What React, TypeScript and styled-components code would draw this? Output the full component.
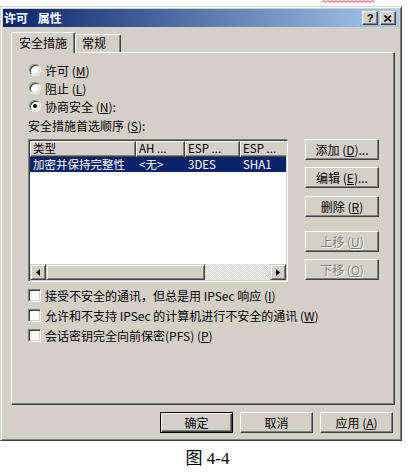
import React from 'react';
import styled, { createGlobalStyle } from 'styled-components';

const GlobalStyle = createGlobalStyle`
  html, body {
    margin: 0;
    padding: 0;
    background: #fff;
  }
  body {
    font-family: "Noto Sans CJK SC", "Noto Sans", sans-serif;
    font-size: 12px;
    color: #000;
  }
`;

const Page = styled.div`
  width: 409px;
  height: 473px;
  display: flex;
  flex-direction: column;
`;

const TopStrip = styled.div`
  height: 6px;
  padding-left: 322px;
  display: flex;
  align-items: flex-start;
`;

const Window = styled.div`
  box-sizing: border-box;
  width: 402px;
  height: 435px;
  padding: 2px;
  background: #d4d0c8;
  border: 1px solid;
  border-color: #d4d0c8 #404040 #404040 #d4d0c8;
  box-shadow: inset 1px 1px #fff, inset -1px -1px #808080;
  display: flex;
  flex-direction: column;
`;

const TitleBar = styled.div`
  height: 18px;
  flex-shrink: 0;
  display: flex;
  align-items: center;
  padding: 0 3px 0 1px;
  background: linear-gradient(to right, #0a246a, #a6caf0);
`;

const TitleText = styled.span`
  flex: 1;
  color: #fff;
  font-weight: bold;
  font-size: 12px;
  line-height: 18px;
  word-spacing: 7px;
`;

const CaptionButton = styled.div<{ $gap?: number }>`
  box-sizing: border-box;
  width: 16px;
  height: 14px;
  margin-left: ${(p) => p.$gap ?? 0}px;
  background: #d4d0c8;
  border: 1px solid;
  border-color: #fff #404040 #404040 #fff;
  box-shadow: inset -1px -1px #808080;
  display: flex;
  align-items: center;
  justify-content: center;
  font-family: "Liberation Sans", sans-serif;
  font-weight: bold;
  font-size: 11px;
  line-height: 12px;
`;

const Body = styled.div`
  flex: 1;
  display: flex;
  flex-direction: column;
  padding: 5px 4px 0 8px;
`;

const TabRow = styled.div`
  display: flex;
  align-items: flex-end;
  height: 20px;
`;

const Tab = styled.div<{ $active?: boolean; $w: number }>`
  position: relative;
  z-index: ${(p) => (p.$active ? 1 : 0)};
  box-sizing: border-box;
  width: ${(p) => p.$w}px;
  height: ${(p) => (p.$active ? 21 : 18)}px;
  margin-bottom: ${(p) => (p.$active ? -1 : 0)}px;
  padding-left: ${(p) => (p.$active ? 0 : 6)}px;
  text-align: ${(p) => (p.$active ? 'center' : 'left')};
  background: #d4d0c8;
  border-top: 1px solid #fff;
  border-left: 1px solid #fff;
  border-right: 1px solid #404040;
  border-top-left-radius: 2px;
  border-top-right-radius: 2px;
  box-shadow: inset -1px 0 #808080;
  line-height: ${(p) => (p.$active ? 19 : 16)}px;
`;

const Panel = styled.div`
  box-sizing: border-box;
  height: 353px;
  border: 1px solid;
  border-color: #fff #404040 #404040 #fff;
  box-shadow: inset -1px -1px #808080;
  padding: 8px 0 0 16px;
  display: flex;
  flex-direction: column;
`;

const OptionRow = styled.label<{ $h?: number }>`
  display: flex;
  align-items: center;
  height: ${(p) => p.$h ?? 18}px;
  gap: 4px;
  white-space: nowrap;
`;

const Radio = styled.span<{ $on?: boolean }>`
  box-sizing: border-box;
  width: 12px;
  height: 12px;
  margin-left: 1px;
  border-radius: 50%;
  background: #fff;
  border: 1px solid;
  border-color: #808080 #fff #fff #808080;
  box-shadow: inset 1px 1px #404040, inset -1px -1px #d4d0c8;
  display: flex;
  align-items: center;
  justify-content: center;

  &::after {
    content: '';
    width: 4px;
    height: 4px;
    border-radius: 50%;
    background: ${(p) => (p.$on ? '#000' : 'transparent')};
  }
`;

const CheckBox = styled.span`
  box-sizing: border-box;
  width: 13px;
  height: 13px;
  background: #fff;
  border: 1px solid;
  border-color: #808080 #fff #fff #808080;
  box-shadow: inset 1px 1px #404040, inset -1px -1px #d4d0c8;
`;

const Underline = styled.span`
  text-decoration: underline;
`;

const SectionLabel = styled.div`
  margin-top: 4px;
  height: 14px;
  line-height: 14px;
  white-space: nowrap;
`;

const Middle = styled.div`
  display: flex;
  margin-top: 6px;
`;

const ListBox = styled.div`
  box-sizing: border-box;
  width: 260px;
  height: 143px;
  background: #fff;
  border: 1px solid;
  border-color: #808080 #fff #fff #808080;
  box-shadow: inset 1px 1px #404040, inset -1px -1px #d4d0c8;
  padding: 1px;
  display: flex;
  flex-direction: column;
`;

const ListInner = styled.div`
  flex: 1;
  overflow: hidden;
  display: flex;
  flex-direction: column;
`;

const HeaderRow = styled.div`
  display: flex;
  height: 16px;
  flex-shrink: 0;
`;

const HeaderCell = styled.div<{ $w: number }>`
  box-sizing: border-box;
  flex-shrink: 0;
  width: ${(p) => p.$w}px;
  height: 16px;
  padding-left: 2px;
  background: #d4d0c8;
  border: 1px solid;
  border-color: #fff #404040 #404040 #fff;
  box-shadow: inset -1px -1px #808080;
  font-size: 11.5px;
  line-height: 13px;
  white-space: nowrap;
`;

const DataRow = styled.div<{ $selected?: boolean }>`
  display: flex;
  height: 15px;
  flex-shrink: 0;
  background: ${(p) => (p.$selected ? '#0a246a' : 'transparent')};
  color: ${(p) => (p.$selected ? '#fff' : '#000')};
`;

const DataCell = styled.div<{ $w: number }>`
  flex-shrink: 0;
  width: ${(p) => p.$w}px;
  padding-left: 3px;
  box-sizing: border-box;
  font-size: 11.5px;
  line-height: 15px;
  white-space: nowrap;
`;

const ListSpacer = styled.div`
  flex: 1;
`;

const ScrollBar = styled.div`
  display: flex;
  height: 16px;
  flex-shrink: 0;
`;

const ScrollButton = styled.div<{ $w: number }>`
  box-sizing: border-box;
  width: ${(p) => p.$w}px;
  height: 16px;
  flex-shrink: 0;
  background: #d4d0c8;
  border: 1px solid;
  border-color: #d4d0c8 #404040 #404040 #d4d0c8;
  box-shadow: inset 1px 1px #fff, inset -1px -1px #808080;
  display: flex;
  align-items: center;
  justify-content: center;
`;

const ScrollTrack = styled.div`
  flex: 1;
  background-color: #d4d0c8;
  background-image: repeating-conic-gradient(#fff 0 25%, #d4d0c8 0 50%);
  background-size: 2px 2px;
`;

const SideButtons = styled.div`
  display: flex;
  flex-direction: column;
  margin-left: 17px;
`;

const Button = styled.div<{ $w?: number; $top?: number; $disabled?: boolean; $default?: boolean }>`
  box-sizing: border-box;
  width: ${(p) => p.$w ?? 73}px;
  height: 21px;
  margin-top: ${(p) => p.$top ?? 0}px;
  background: #d4d0c8;
  border: 1px solid;
  border-color: ${(p) => (p.$default ? '#000' : '#fff #404040 #404040 #fff')};
  box-shadow: ${(p) =>
    p.$default
      ? 'inset 1px 1px #fff, inset -1px -1px #404040, inset -2px -2px #808080'
      : 'inset -1px -1px #808080'};
  display: flex;
  align-items: center;
  justify-content: center;
  white-space: nowrap;
  color: ${(p) => (p.$disabled ? '#808080' : '#000')};
  text-shadow: ${(p) => (p.$disabled ? '1px 1px #fff' : 'none')};
`;

const CheckGroup = styled.div`
  display: flex;
  flex-direction: column;
  gap: 2px;
  margin-top: 4px;
`;

const ButtonRow = styled.div`
  display: flex;
  justify-content: flex-end;
  gap: 7px;
  margin-top: 7px;
  padding-right: 2px;
`;

const Caption = styled.div`
  margin-top: 8px;
  text-align: center;
  font-family: "Liberation Serif", "Noto Sans CJK SC", serif;
  font-size: 17px;
  line-height: 20px;
  padding-left: 6px;
`;

const Key: React.FC<{ k: string }> = ({ k }) => (
  <>
    {' ('}
    <Underline>{k}</Underline>)
  </>
);

const columns = [106, 49, 55, 60];

const Arrow: React.FC<{ dir: 'left' | 'right' }> = ({ dir }) => (
  <svg width="4" height="7" viewBox="0 0 4 7">
    {dir === 'left' ? <polygon points="4,0 4,7 0,3.5" fill="#000" /> : <polygon points="0,0 0,7 4,3.5" fill="#000" />}
  </svg>
);

export default function App() {
  return (
    <Page>
      <GlobalStyle />
      <TopStrip>
        <svg width="53" height="3" viewBox="0 0 53 3">
          <polyline
            points={Array.from({ length: 27 }, (_, i) => `${i * 2},${i % 2 ? 0.5 : 2.5}`).join(' ')}
            fill="none"
            stroke="#e03030"
            strokeWidth="1"
          />
        </svg>
      </TopStrip>
      <Window>
        <TitleBar>
          <TitleText>许可 属性</TitleText>
          <CaptionButton>?</CaptionButton>
          <CaptionButton $gap={2}>
            <svg width="8" height="7" viewBox="0 0 8 7">
              <path d="M0.5 0.5 L7 6.5 M7 0.5 L0.5 6.5" stroke="#000" strokeWidth="1.6" />
            </svg>
          </CaptionButton>
        </TitleBar>
        <Body>
          <TabRow>
            <Tab $active $w={64}>安全措施</Tab>
            <Tab $w={46}>常规</Tab>
          </TabRow>
          <Panel>
            <OptionRow>
              <Radio />
              <span>
                许可<Key k="M" />
              </span>
            </OptionRow>
            <OptionRow>
              <Radio />
              <span>
                阻止<Key k="L" />
              </span>
            </OptionRow>
            <OptionRow>
              <Radio $on />
              <span>
                协商安全<Key k="N" />:
              </span>
            </OptionRow>
            <SectionLabel>
              安全措施首选顺序<Key k="S" />:
            </SectionLabel>
            <Middle>
              <ListBox>
                <ListInner>
                  <HeaderRow>
                    <HeaderCell $w={columns[0]}>类型</HeaderCell>
                    <HeaderCell $w={columns[1]}>AH ...</HeaderCell>
                    <HeaderCell $w={columns[2]}>ESP ...</HeaderCell>
                    <HeaderCell $w={columns[3]}>ESP ...</HeaderCell>
                  </HeaderRow>
                  <DataRow $selected>
                    <DataCell $w={columns[0]}>加密并保持完整性</DataCell>
                    <DataCell $w={columns[1]}>&lt;无&gt;</DataCell>
                    <DataCell $w={columns[2]}>3DES</DataCell>
                    <DataCell $w={columns[3]}>SHA1</DataCell>
                  </DataRow>
                  <ListSpacer />
                  <ScrollBar>
                    <ScrollButton $w={16}>
                      <Arrow dir="left" />
                    </ScrollButton>
                    <ScrollButton $w={159} />
                    <ScrollTrack />
                    <ScrollButton $w={16}>
                      <Arrow dir="right" />
                    </ScrollButton>
                  </ScrollBar>
                </ListInner>
              </ListBox>
              <SideButtons>
                <Button $w={74}>
                  添加<Key k="D" />...
                </Button>
                <Button $w={74} $top={7}>
                  编辑<Key k="E" />...
                </Button>
                <Button $w={74} $top={8}>
                  删除<Key k="R" />
                </Button>
                <Button $w={74} $top={14} $disabled>
                  上移<Key k="U" />
                </Button>
                <Button $w={74} $top={7} $disabled>
                  下移<Key k="O" />
                </Button>
              </SideButtons>
            </Middle>
            <CheckGroup>
              <OptionRow>
                <CheckBox />
                <span>
                  接受不安全的通讯，但总是用 IPSec 响应<Key k="I" />
                </span>
              </OptionRow>
              <OptionRow>
                <CheckBox />
                <span>
                  允许和不支持 IPSec 的计算机进行不安全的通讯<Key k="W" />
                </span>
              </OptionRow>
              <OptionRow>
                <CheckBox />
                <span>
                  会话密钥完全向前保密(PFS)<Key k="P" />
                </span>
              </OptionRow>
            </CheckGroup>
          </Panel>
          <ButtonRow>
            <Button $default>确定</Button>
            <Button>取消</Button>
            <Button>
              应用<Key k="A" />
            </Button>
          </ButtonRow>
        </Body>
      </Window>
      <Caption>图 4-4</Caption>
    </Page>
  );
}
